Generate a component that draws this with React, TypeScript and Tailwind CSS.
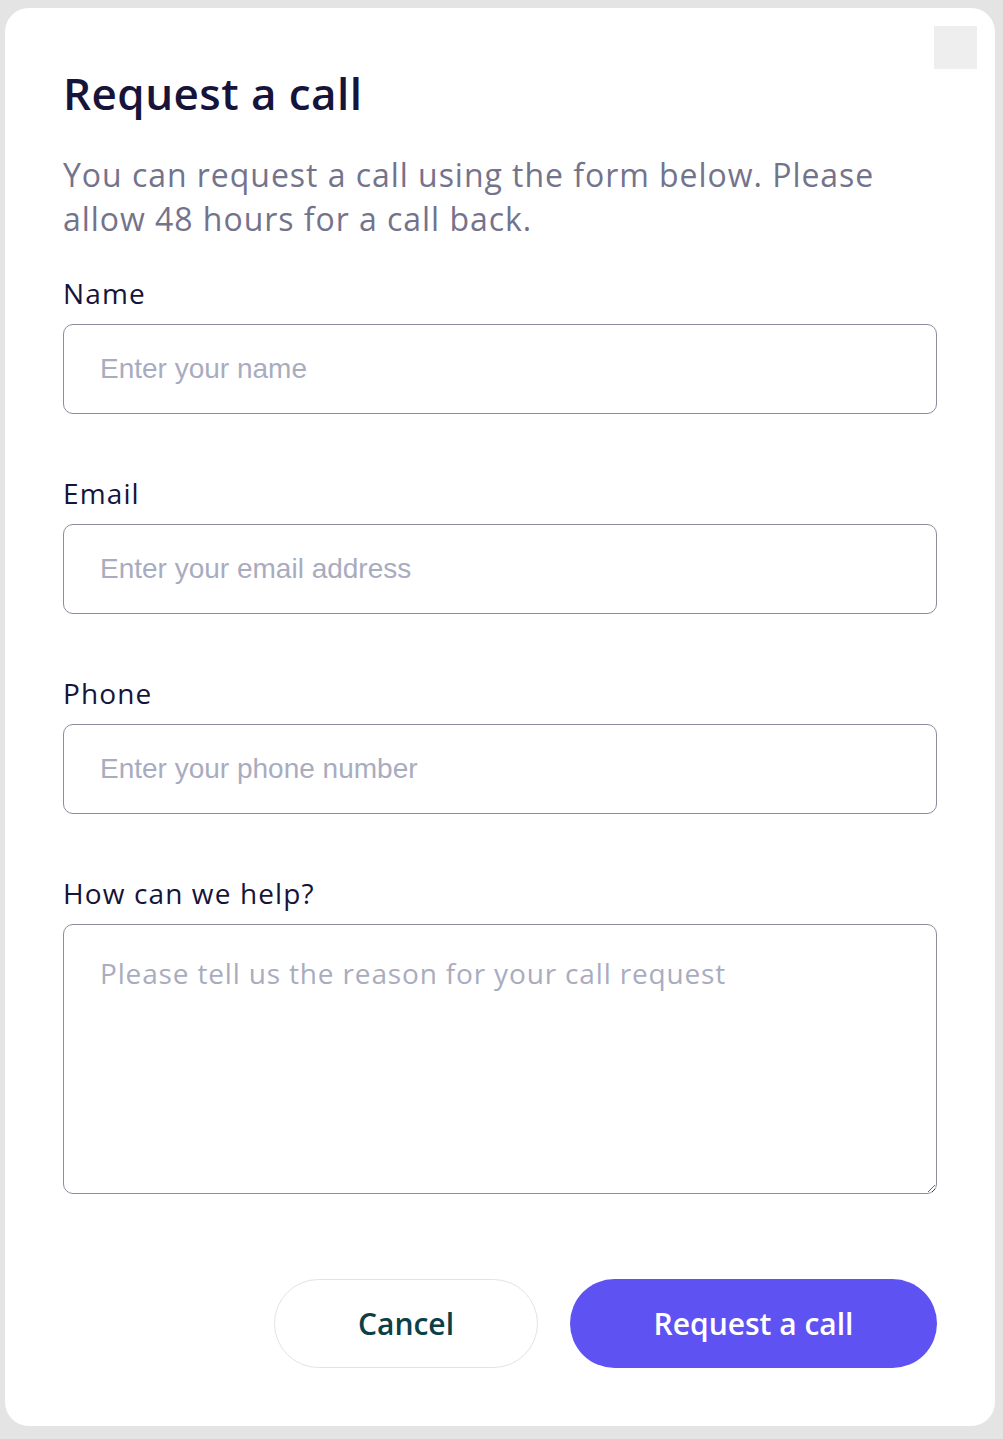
import React from 'react';

const brand = "font-['Open_Sans','Noto_Sans',sans-serif]";

const Field: React.FC<{ label: string; placeholder: string; type?: string }> = ({ label, placeholder, type = 'text' }) => (
  <div className="flex flex-col">
    <label className={`${brand} text-[28px] leading-[36px] tracking-[0.04em] text-[#16143a]`}>{label}</label>
    <input
      type={type}
      placeholder={placeholder}
      className="mt-[13px] h-[90px] w-full rounded-[10px] border border-[#8c8ba0] bg-white px-9 font-['Liberation_Sans',Arial,sans-serif] text-[28px] text-[#16143a] placeholder:text-[#a9acbf] outline-none"
    />
  </div>
);

export default function App() {
  return (
    <div className="min-h-screen bg-[#e4e4e4] pl-[5px] pt-[8px]">
      <div className="relative w-[990px] rounded-[24px] bg-white px-[58px] pb-[58px] pt-[55px]">
        {/* close button, no icon visible */}
        <button className="absolute right-[18px] top-[18px] h-[43px] w-[43px] bg-[#eeeeee]" aria-label="Close" />

        <h1 className={`${brand} text-[44px] font-semibold leading-[60px] tracking-[0.01em] text-[#16143a]`}>Request a call</h1>
        <p className={`${brand} mt-[30px] text-[32px] leading-[44px] tracking-[0.03em] text-[#74738c]`}>
          You can request a call using the form below. Please allow 48 hours for a call back.
        </p>

        <div className="mt-[34px] flex flex-col gap-[61px]">
          <Field label="Name" placeholder="Enter your name" />
          <Field label="Email" placeholder="Enter your email address" type="email" />
          <Field label="Phone" placeholder="Enter your phone number" type="tel" />
          <div className="flex flex-col">
            <label className={`${brand} text-[28px] leading-[36px] tracking-[0.04em] text-[#16143a]`}>How can we help?</label>
            <textarea
              placeholder="Please tell us the reason for your call request"
              className={`${brand} mt-[13px] h-[270px] w-full rounded-[10px] border border-[#8c8ba0] bg-white px-9 pt-[28px] text-[28px] leading-[40px] tracking-[0.03em] text-[#16143a] placeholder:text-[#a9acbf] outline-none`}
            />
          </div>
        </div>

        <div className="mt-[85px] flex justify-end gap-[32px]">
          <button className={`${brand} h-[89px] w-[264px] rounded-full border border-[#e3e3e6] bg-white text-[30px] font-semibold text-[#0a4046]`}>
            Cancel
          </button>
          <button className={`${brand} h-[89px] w-[367px] rounded-full bg-[#5f52f3] text-[30px] font-semibold text-white`}>
            Request a call
          </button>
        </div>
      </div>
    </div>
  );
}
